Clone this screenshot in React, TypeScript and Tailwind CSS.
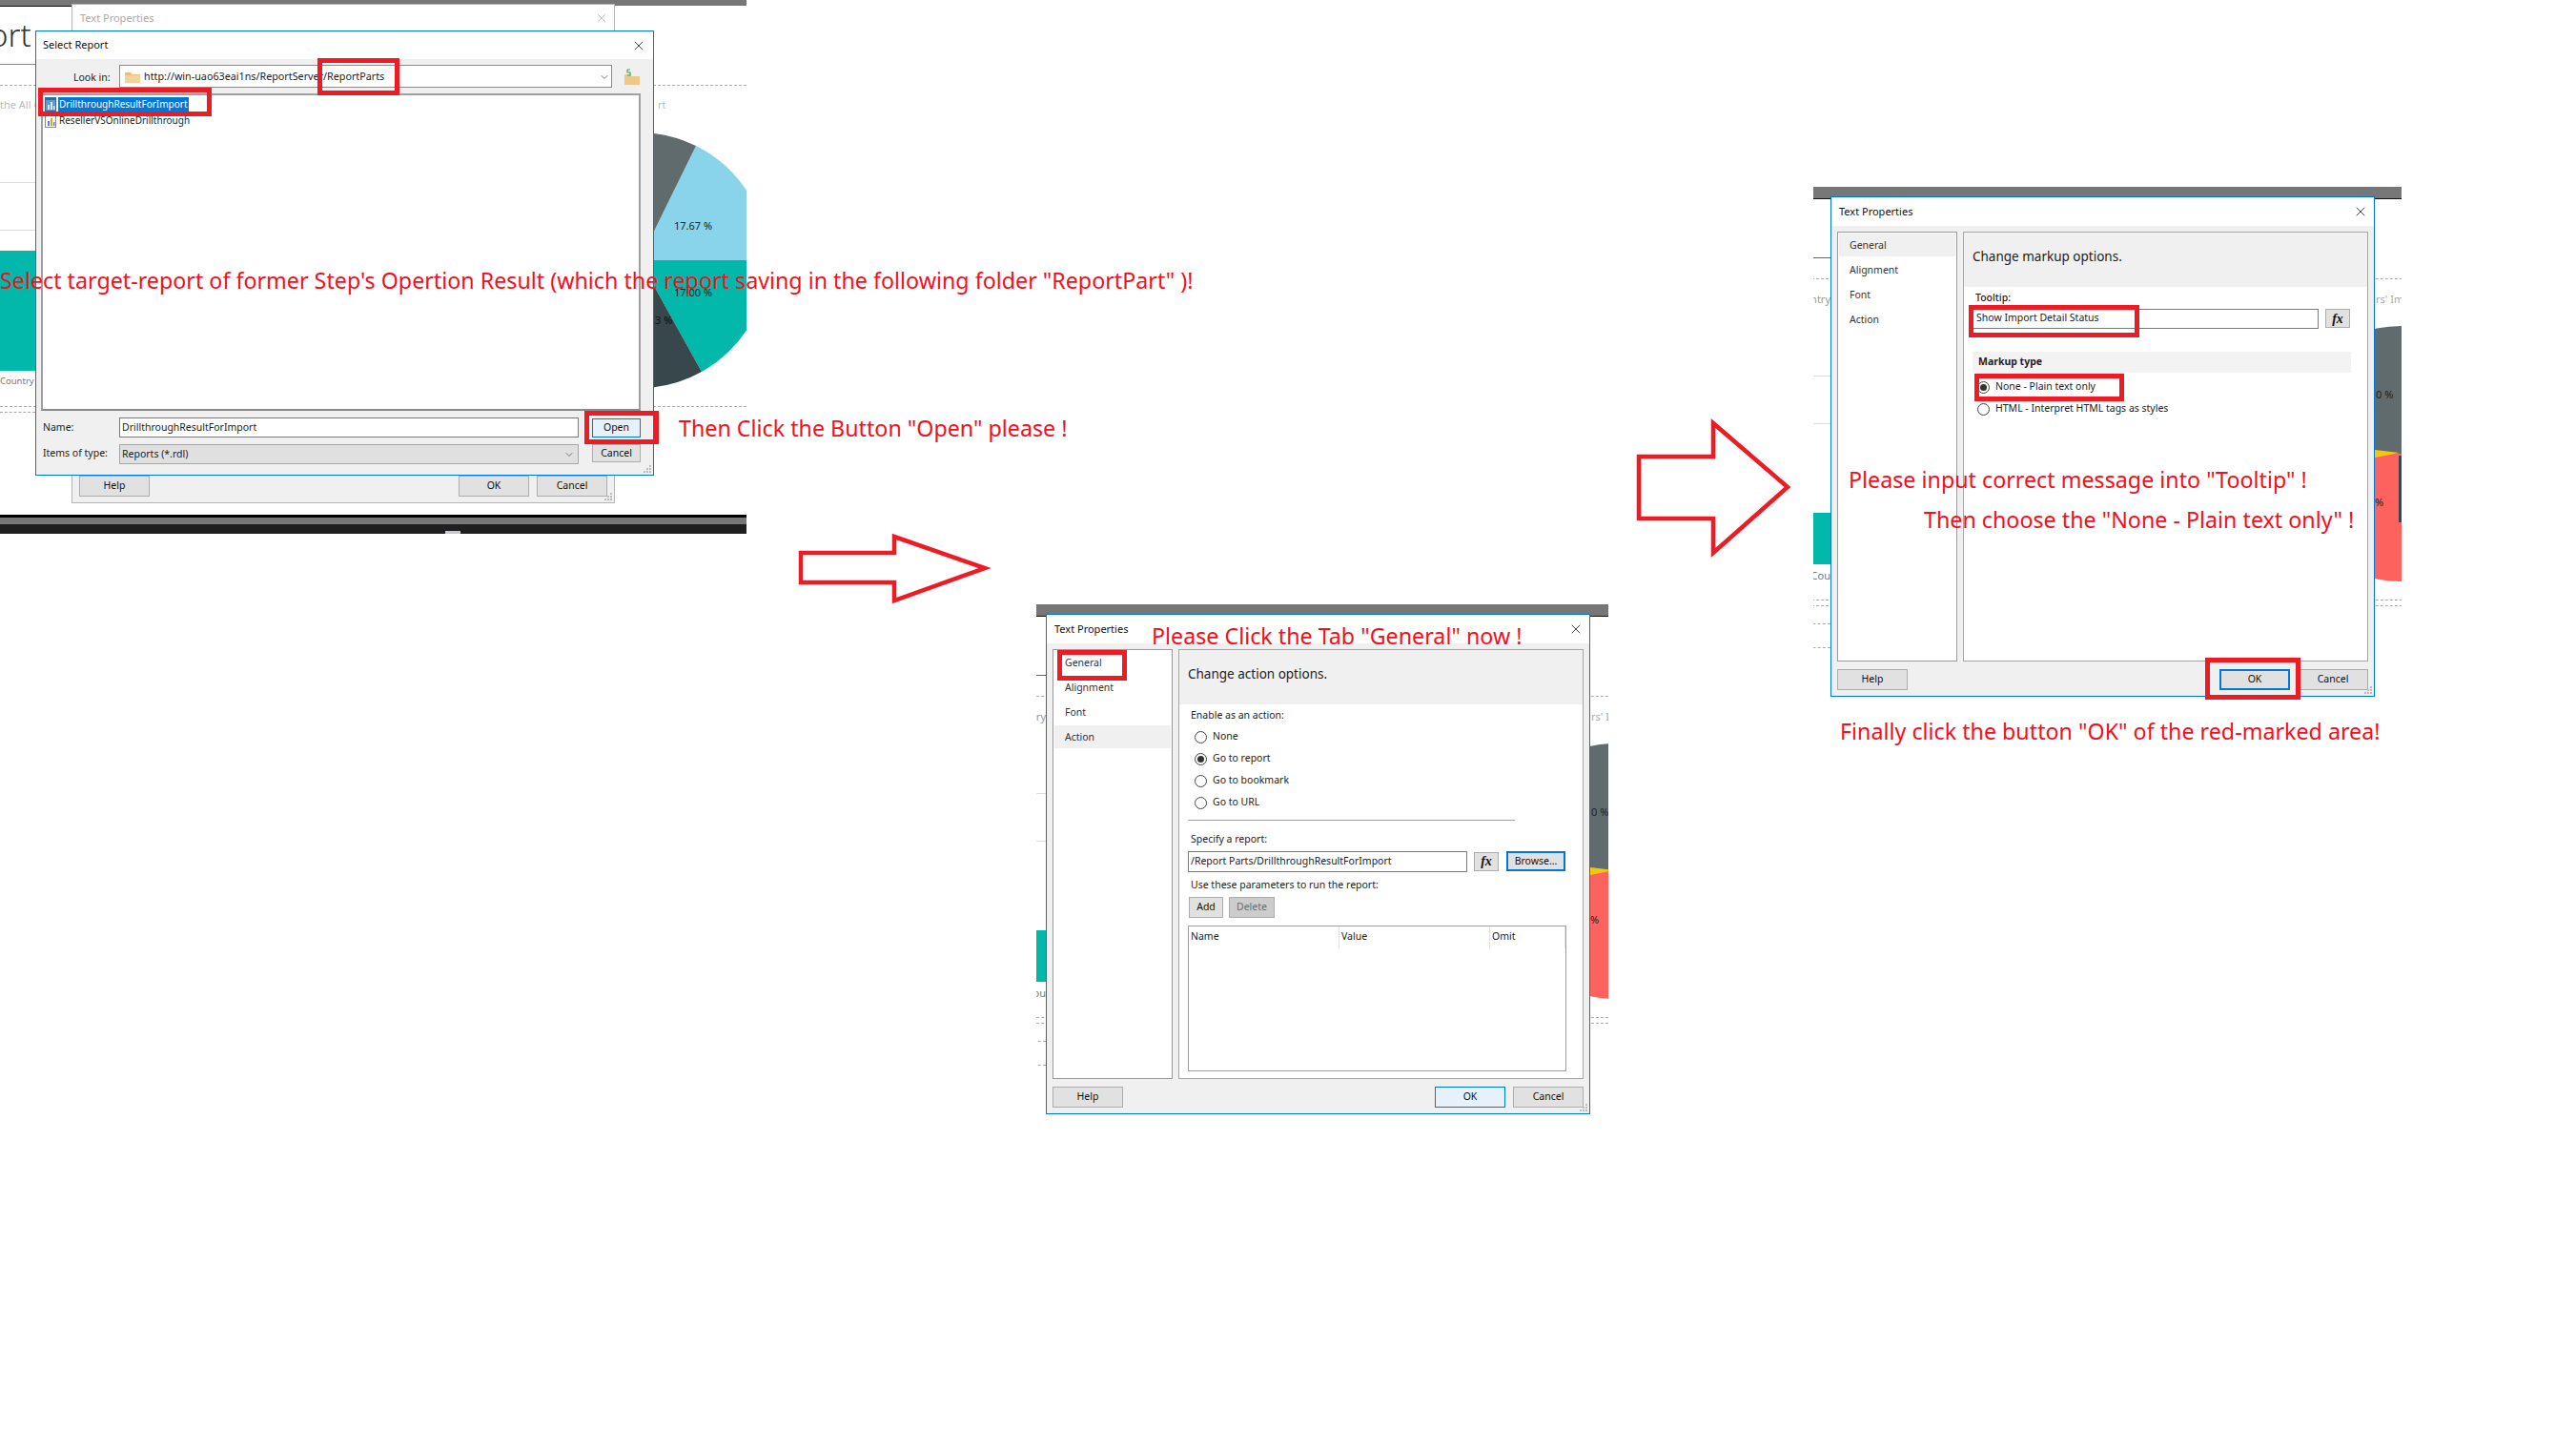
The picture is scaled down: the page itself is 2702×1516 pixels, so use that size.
import React from 'react';
import { ChevronDown, X } from 'lucide-react';

const ui = "font-['Noto_Sans','Open_Sans',sans-serif]";

// red marker frame drawn over the screenshots
function Mark({ className }: { className: string }) {
  return <div className={`absolute border-[5px] border-[#ed1c24] ${className}`} />;
}

function Note({ className, children }: { className: string; children: React.ReactNode }) {
  return (
    <div className={`absolute whitespace-nowrap font-['Noto_Sans',sans-serif] text-[23.25px] leading-[30px] text-[#f2101c] ${className}`}>
      {children}
    </div>
  );
}

function Btn({ children, className = '', variant = 'plain' }: { children: React.ReactNode; className?: string; variant?: 'plain' | 'hover' | 'focus' }) {
  const look =
    variant === 'hover'
      ? 'border border-[#0078d7] bg-[#e5f1fb]'
      : variant === 'focus'
        ? 'border-2 border-[#0078d7] bg-[#e1e1e1]'
        : 'border border-[#adadad] bg-[#e1e1e1]';
  return <div className={`flex items-center justify-center text-[10.5px] text-[#111] ${look} ${className}`}>{children}</div>;
}

function Fx() {
  return (
    <Btn className="h-[20px] w-[26px] font-['Liberation_Serif',serif] !text-[14px] font-bold italic">fx</Btn>
  );
}

function Radio({ label, checked = false }: { label: string; checked?: boolean }) {
  return (
    <div className="flex h-[23px] items-center gap-[6px] text-[10.5px] text-[#222]">
      <div className="flex h-[13px] w-[13px] items-center justify-center rounded-full border border-[#444] bg-white">
        {checked && <div className="h-[7px] w-[7px] rounded-full bg-[#333]" />}
      </div>
      <span>{label}</span>
    </div>
  );
}

function Grip({ className }: { className: string }) {
  return (
    <svg className={`absolute ${className}`} width="9" height="9" viewBox="0 0 9 9" fill="#bcbcbc">
      <rect x="6" y="0" width="2" height="2" />
      <rect x="3" y="3" width="2" height="2" />
      <rect x="6" y="3" width="2" height="2" />
      <rect x="0" y="6" width="2" height="2" />
      <rect x="3" y="6" width="2" height="2" />
      <rect x="6" y="6" width="2" height="2" />
    </svg>
  );
}

function ReportIcon({ selected = false }: { selected?: boolean }) {
  return (
    <svg width="12" height="15" viewBox="0 0 12 15" className="shrink-0">
      <rect x="0.5" y="0.5" width="11" height="14" fill={selected ? '#5a9bd8' : '#fff'} stroke={selected ? '#2c6aa8' : '#8a8a8a'} />
      <rect x="1" y="1" width="10" height="2" fill={selected ? '#2c6aa8' : '#c9c9c9'} />
      <rect x="3" y="8" width="2" height="5" fill={selected ? '#dbe9f6' : '#4a8bc9'} />
      <rect x="6" y="5" width="2" height="8" fill={selected ? '#dbe9f6' : '#e0a030'} />
      <rect x="9" y="9" width="1.5" height="4" fill={selected ? '#dbe9f6' : '#4a8bc9'} />
    </svg>
  );
}

function Folder({ className = '' }: { className?: string }) {
  return (
    <svg width="16" height="13" viewBox="0 0 16 13" className={className}>
      <path d="M0 2h6l1.5 2H16v9H0z" fill="#e8c07a" />
      <path d="M0 5h16v8H0z" fill="#f2d49b" />
    </svg>
  );
}

function PropertiesDialog({ className, active, heading, children, okFocus = false }: { className: string; active: string; heading: string; children: React.ReactNode; okFocus?: boolean }) {
  return (
    <div className={`absolute flex h-[525px] w-[571px] flex-col border border-[#0078d7] bg-white ${ui} ${className}`}>
      <div className="flex h-[30px] shrink-0 items-center justify-between pl-[8px] pr-[6px] text-[11px] text-[#111]">
        <span>Text Properties</span>
        <X className="h-[16px] w-[16px] text-[#222]" strokeWidth={1.25} />
      </div>
      <div className="relative flex flex-1 flex-col bg-[#f0f0f0] px-[6px] pt-[6px]">
        <div className="flex h-[451px] gap-[6px]">
          <div className="flex w-[126px] flex-col border border-[#9a9a9e] bg-white p-[1px]">
            {['General', 'Alignment', 'Font', 'Action'].map((item) => (
              <div key={item} className={`mb-[2px] flex h-[24px] items-center pl-[11px] pt-[2px] text-[10.5px] text-[#333] ${item === active ? 'bg-[#f0f0f0]' : ''}`}>
                {item}
              </div>
            ))}
          </div>
          <div className="flex w-[425px] flex-col border border-[#a6a6a6] bg-white">
            <div className="flex h-[57px] shrink-0 items-start bg-[#f0f0f0] pl-[9px] pt-[15px] text-[13.5px] leading-[20px] text-[#222]">{heading}</div>
            {children}
          </div>
        </div>
        <div className="mt-[8px] flex gap-[8px]">
          <Btn className="h-[22px] w-[74px]">Help</Btn>
          <div className="flex-1" />
          <Btn className="h-[22px] w-[74px]" variant={okFocus ? 'focus' : 'hover'}>OK</Btn>
          <Btn className="h-[22px] w-[74px]">Cancel</Btn>
        </div>
        <Grip className="bottom-[1px] right-[1px]" />
      </div>
    </div>
  );
}

// the report page visible around the dialog; same page in both later screenshots
function PageShot({ className, dialogX }: { className: string; dialogX: string }) {
  return (
    <div className={`absolute h-[535px] overflow-hidden bg-white ${className}`}>
      <div className="h-[12px] bg-[#777777]" />
      <div className="h-[1px] bg-[#111]" />
      <div className={`absolute top-[10px] h-[525px] w-[640px] font-['Noto_Sans',sans-serif] ${dialogX}`}>
        <div className="absolute -left-[60px] top-[64px] h-[1px] w-[60px] bg-[#666]" />
        <div className="absolute -left-[60px] top-[86px] w-[700px] border-t border-dashed border-[#aaa]" />
        <div className="absolute -left-[60px] top-[188px] h-[1px] w-[60px] bg-[#ddd]" />
        <div className="absolute -left-[60px] top-[238px] h-[1px] w-[60px] bg-[#ddd]" />
        <div className="absolute -left-[60px] top-[332px] h-[54px] w-[60px] bg-[#01b8aa]" />
        <div className="absolute -left-[60px] top-[423px] w-[700px] border-t border-dashed border-[#aaa]" />
        <div className="absolute -left-[60px] top-[429px] w-[700px] border-t border-dashed border-[#aaa]" />
        <div className="absolute -left-[60px] top-[448px] w-[60px] border-t border-dashed border-[#aaa]" />
        <div className="absolute -left-[60px] top-[473px] w-[60px] border-t border-dashed border-[#aaa]" />
        <div className="absolute -left-[30px] top-[100px] w-[30px] text-right text-[11px] text-[#999]">ntry</div>
        <div className="absolute -left-[30px] top-[390px] w-[30px] text-right text-[11px] text-[#777]">Cou</div>
        <div className="absolute left-[572px] top-[100px] text-[11px] text-[#aaa]">rs' Imp</div>
        <svg className="absolute left-[465px] top-[130px]" width="170" height="280" viewBox="465 130 170 280">
          <defs>
            <clipPath id="pie-right">
              <circle cx="599" cy="270" r="134" />
            </clipPath>
          </defs>
          <g clipPath="url(#pie-right)">
            <rect x="460" y="130" width="180" height="140" fill="#5f6b6d" />
            <rect x="460" y="270" width="180" height="140" fill="#fd625e" />
            <path d="M597 269 L520 260 L520 284 Z" fill="#f2c80f" />
            <rect x="596" y="272" width="3" height="70" fill="#37474b" />
          </g>
        </svg>
        <div className="absolute left-[572px] top-[200px] text-[11px] text-[#222]">0 %</div>
        <div className="absolute left-[571px] top-[313px] text-[11px] text-[#222]">%</div>
      </div>
    </div>
  );
}

export default function App() {
  return (
    <div className="relative h-[1516px] w-[2702px] overflow-hidden bg-white">
      {/* Step 1: Select Report */}
      <div className={`absolute left-0 top-0 h-[560px] w-[783px] overflow-hidden bg-white ${ui}`}>
        <div className="h-[6px] bg-[#777777]" />
        <div className="h-[1px] w-[75px] bg-[#111]" />
        <div className="absolute left-0 top-[15px] h-[44px] w-[37px] overflow-hidden text-[33px] font-light leading-[44px] text-[#333]">
          <span className="relative -left-[11px]">ort</span>
        </div>
        <div className="absolute left-0 top-[67px] h-[1px] w-[37px] bg-[#888]" />
        <div className="absolute left-0 top-[89px] w-[783px] border-t border-dashed border-[#aaa]" />
        <div className="absolute left-0 top-[102px] w-[37px] overflow-hidden whitespace-nowrap text-[11px] text-[#bbb]">the All C</div>
        <div className="absolute left-[690px] top-[102px] text-[11px] text-[#bbb]">rt</div>
        <div className="absolute left-0 top-[191px] h-[1px] w-[37px] bg-[#ddd]" />
        <div className="absolute left-0 top-[241px] h-[1px] w-[37px] bg-[#ddd]" />
        <div className="absolute left-0 top-[263px] h-[126px] w-[37px] bg-[#01b8aa]" />
        <div className="absolute left-0 top-[393px] text-[9.5px] text-[#777]">Country</div>
        <div className="absolute left-0 top-[426px] w-[783px] border-t border-dashed border-[#aaa]" />
        <div className="absolute left-0 top-[432px] w-[37px] border-t border-dashed border-[#aaa]" />

        <svg className="absolute left-[686px] top-[130px]" width="97" height="290" viewBox="686 130 97 290">
          <path d="M671 273 L730 153 A134 134 0 0 1 805 273 Z" fill="#89d3eb" />
          <path d="M671 273 L671 139 A134 134 0 0 1 730 153 Z" fill="#5f6b6d" />
          <path d="M671 273 L805 273 A134 134 0 0 1 736 390 Z" fill="#01b8aa" />
          <path d="M671 273 L736 390 A134 134 0 0 1 671 407 Z" fill="#37474b" />
        </svg>
        <div className="absolute left-[707px] top-[229px] text-[11px] text-[#222]">17.67 %</div>
        <div className="absolute left-[707px] top-[299px] text-[11px] text-[#222]">17.00 %</div>
        <div className="absolute left-[687px] top-[328px] text-[11px] text-[#111]">3 %</div>

        <div className="absolute left-[75px] top-[4px] h-[524px] w-[570px] border border-[#b5b5b5] bg-white">
          <div className="flex h-[28px] items-center justify-between pl-[8px] pr-[6px] text-[11px] text-[#aaa]">
            <span>Text Properties</span>
            <X className="h-[14px] w-[14px] text-[#aaa]" strokeWidth={1.25} />
          </div>
          <div className="absolute bottom-0 left-0 right-0 flex h-[36px] items-start gap-[8px] bg-[#f0f0f0] px-[7px] pt-[8px]">
            <Btn className="h-[22px] w-[74px]">Help</Btn>
            <div className="flex-1" />
            <Btn className="h-[22px] w-[74px]">OK</Btn>
            <Btn className="h-[22px] w-[74px]">Cancel</Btn>
          </div>
          <Grip className="bottom-[1px] right-[1px]" />
        </div>

        <div className="absolute left-[37px] top-[32px] flex h-[467px] w-[649px] flex-col border border-[#0078d7] bg-white">
          <div className="flex h-[29px] shrink-0 items-center justify-between pl-[7px] pr-[7px] text-[11px] text-[#111]">
            <span>Select Report</span>
            <X className="h-[16px] w-[16px] text-[#222]" strokeWidth={1.25} />
          </div>
          <div className="relative flex-1 bg-[#f0f0f0] text-[10.5px] text-[#222]">
            <div className="mt-[6px] flex h-[24px] items-center">
              <div className="w-[87px] pl-[39px] pt-[3px]">Look in:</div>
              <div className="flex h-[24px] w-[517px] items-center border border-[#8c8c8c] bg-white pl-[5px] pr-[1px] pt-[1px]">
                <Folder />
                <span className="ml-[4px] flex-1 text-[10.75px]">http://win-uao63eai1ns/ReportServer/ReportParts</span>
                <ChevronDown className="h-[12px] w-[12px] text-[#444]" strokeWidth={1.5} />
              </div>
              <svg width="16" height="17" viewBox="0 0 16 17" className="ml-[13px]">
                <path d="M0 6h6l1.5 2H16v9H0z" fill="#ecc98a" />
                <path d="M3 1h3M3 1v3h3v3H3" stroke="#4f9a5c" strokeWidth="1.2" fill="none" />
              </svg>
            </div>
            <div className="ml-[5px] mt-[6px] h-[333px] w-[629px] border-2 border-[#a0a0a0] border-b-[#8a8a8a] bg-white pl-[2px] pt-[1px] text-[10px]">
              <div className="flex h-[17px] items-center gap-[2px]">
                <ReportIcon selected />
                <span className="flex h-[16px] items-center bg-[#0078d7] px-[1px] text-white">DrillthroughResultForImport</span>
              </div>
              <div className="flex h-[17px] items-center gap-[2px]">
                <ReportIcon />
                <span className="px-[1px]">ResellerVSOnlineDrillthrough</span>
              </div>
            </div>
            <div className="mt-[7px] flex items-center">
              <div className="w-[87px] pl-[7px]">Name:</div>
              <div className="flex h-[21px] w-[482px] items-center border border-[#7a7a7a] bg-white pl-[2px]">DrillthroughResultForImport</div>
              <Btn className="ml-[14px] h-[20px] w-[51px]" variant="hover">Open</Btn>
            </div>
            <div className="mt-[7px] flex items-start">
              <div className="w-[87px] pl-[7px] pt-[2px]">Items of type:</div>
              <div className="flex h-[21px] w-[482px] items-center justify-between border border-[#a6a6a6] bg-[#e0e0e0] pl-[2px] pr-[3px]">
                <span>Reports (*.rdl)</span>
                <ChevronDown className="h-[12px] w-[12px] text-[#555]" strokeWidth={1.5} />
              </div>
              <Btn className="ml-[14px] h-[19px] w-[51px]">Cancel</Btn>
            </div>
            <Grip className="bottom-[1px] right-[1px]" />
          </div>
        </div>

        <div className="absolute left-0 top-[540px] w-full">
          <div className="h-[3px] bg-black" />
          <div className="h-[7px] bg-[#777777]" />
          <div className="h-[10px] bg-[#1f1f1f]" />
        </div>
        <div className="absolute left-[467px] top-[557px] h-[3px] w-[16px] bg-[#c8c8d0]" />
      </div>
      <Mark className="left-[333px] top-[61px] h-[39px] w-[86px]" />
      <Mark className="left-[40px] top-[92px] h-[30px] w-[182px]" />
      <Mark className="left-[613px] top-[431px] h-[35px] w-[78px]" />
      <Note className="left-0 top-[279px]">Select target-report of former Step's Opertion Result (which the report saving in the following folder "ReportPart" )!</Note>
      <Note className="left-[712px] top-[434px]">Then Click the Button "Open" please !</Note>

      <svg className="absolute left-[830px] top-[552px]" width="215" height="90" viewBox="830 552 215 90">
        <path d="M840 580 H938 V563 L1033 596 L938 630 V611 H840 Z" fill="none" stroke="#ed1c24" strokeWidth="4.5" />
      </svg>

      {/* Step 2: Action page */}
      <PageShot className="left-[1087px] top-[634px] w-[600px]" dialogX="left-[10px]" />
      <PropertiesDialog className="left-[1097px] top-[644px]" active="Action" heading="Change action options.">
        <div className="flex flex-1 flex-col px-[9px] text-[10.5px] text-[#222]">
          <div className="mt-[4px] pl-[3px]">Enable as an action:</div>
          <div className="mt-[3px] pl-[7px]">
            <Radio label="None" />
            <Radio label="Go to report" checked />
            <Radio label="Go to bookmark" />
            <Radio label="Go to URL" />
          </div>
          <div className="mt-[6px] h-[1px] w-[343px] bg-[#a0a0a0]" />
          <div className="mt-[12px] pl-[3px]">Specify a report:</div>
          <div className="mt-[4px] flex items-center">
            <div className="flex h-[22px] w-[293px] items-center border border-[#7a7a7a] pl-[2px]">/Report Parts/DrillthroughResultForImport</div>
            <div className="ml-[7px]"><Fx /></div>
            <Btn className="ml-[8px] h-[21px] w-[62px]" variant="focus">Browse...</Btn>
          </div>
          <div className="mt-[6px] pl-[3px]">Use these parameters to run the report:</div>
          <div className="mt-[5px] flex gap-[6px] pl-[1px]">
            <Btn className="h-[22px] w-[36px]">Add</Btn>
            <Btn className="h-[22px] w-[48px] !bg-[#cccccc] !text-[#6d6d6d]">Delete</Btn>
          </div>
          <div className="mt-[8px] h-[153px] w-[397px] border border-[#a0a0a0]">
            <div className="flex h-[23px]">
              <div className="w-[158px] border-r border-[#e3e3e3] pl-[2px] pt-[3px]">Name</div>
              <div className="w-[158px] border-r border-[#e3e3e3] pl-[2px] pt-[3px]">Value</div>
              <div className="w-[79px] border-r border-[#e3e3e3] pl-[2px] pt-[3px]">Omit</div>
            </div>
          </div>
        </div>
      </PropertiesDialog>
      <Mark className="left-[1109px] top-[682px] h-[32px] w-[73px]" />
      <Note className="left-[1208px] top-[652px]">Please Click the Tab "General" now !</Note>

      <svg className="absolute left-[1705px] top-[430px]" width="185" height="160" viewBox="1705 430 185 160">
        <path d="M1719 479 H1797 V444 L1875 511 L1797 580 V544 H1719 Z" fill="none" stroke="#ed1c24" strokeWidth="4.5" />
      </svg>

      {/* Step 3: General page */}
      <PageShot className="left-[1902px] top-[196px] w-[617px]" dialogX="left-[18px]" />
      <PropertiesDialog className="left-[1920px] top-[206px]" active="General" heading="Change markup options." okFocus>
        <div className="flex flex-1 flex-col px-[9px] text-[10.5px] text-[#222]">
          <div className="mt-[4px] pl-[3px] font-medium">Tooltip:</div>
          <div className="mt-[3px] flex items-center gap-[7px]">
            <div className="flex h-[21px] w-[363px] items-center border border-[#7a7a7a] pl-[3px]">Show Import Detail Status</div>
            <Fx />
          </div>
          <div className="mt-[24px] flex h-[22px] w-[397px] items-center bg-[#f3f3f3] pl-[6px] font-bold">Markup type</div>
          <div className="mt-[4px] pl-[5px]">
            <Radio label="None - Plain text only" checked />
            <Radio label="HTML - Interpret HTML tags as styles" />
          </div>
        </div>
      </PropertiesDialog>
      <Mark className="left-[2065px] top-[320px] h-[34px] w-[179px]" />
      <Mark className="left-[2071px] top-[392px] h-[29px] w-[157px]" />
      <Mark className="left-[2313px] top-[690px] h-[44px] w-[100px]" />
      <Note className="left-[1939px] top-[488px]">Please input correct message into "Tooltip" !</Note>
      <Note className="left-[2018px] top-[530px]">Then choose the "None - Plain text only" !</Note>
      <Note className="left-[1930px] top-[752px]">Finally click the button "OK" of the red-marked area!</Note>
    </div>
  );
}
